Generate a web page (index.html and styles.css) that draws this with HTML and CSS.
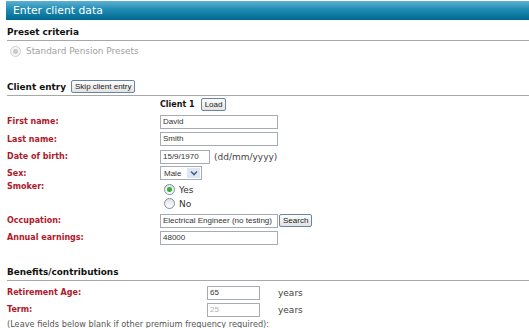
FILE: index.html
```html
<!DOCTYPE html>
<html lang="en">
<head>
    <meta charset="UTF-8">
    <title>Enter client data</title>
    <link rel="stylesheet" href="styles.css">
</head>
<body>
    <div class="panel">
        <div class="panel-title">Enter client data</div>

        <div class="section-head">
            <span class="section-title">Preset criteria</span>
        </div>
        <label class="preset">
            <span class="radio disabled"><span class="dot"></span></span>
            Standard Pension Presets
        </label>

        <div class="section-head client-head">
            <span class="section-title">Client entry</span>
            <button class="btn">Skip client entry</button>
        </div>

        <div class="form">
            <div class="row">
                <div class="label"></div>
                <div class="field"><span class="client-name">Client 1</span><button class="btn">Load</button></div>
            </div>
            <div class="row">
                <div class="label">First name:</div>
                <div class="field"><div class="input wide">David</div></div>
            </div>
            <div class="row tall">
                <div class="label">Last name:</div>
                <div class="field"><div class="input wide">Smith</div></div>
            </div>
            <div class="row">
                <div class="label">Date of birth:</div>
                <div class="field"><div class="input date">15/9/1970</div><span class="hint">(dd/mm/yyyy)</span></div>
            </div>
            <div class="row short-row">
                <div class="label">Sex:</div>
                <div class="field">
                    <div class="select">Male<span class="arrow"><svg width="8" height="6" viewBox="0 0 8 6"><path d="M1 1.5l3 3 3-3" fill="none" stroke="#4d6185" stroke-width="1.6"/></svg></span></div>
                </div>
            </div>
            <div class="row smoker-row">
                <div class="label">Smoker:</div>
                <div class="field radios">
                    <label class="opt"><span class="radio checked"><span class="dot"></span></span>Yes</label>
                    <label class="opt"><span class="radio"></span>No</label>
                </div>
            </div>
            <div class="row">
                <div class="label">Occupation:</div>
                <div class="field"><div class="input wide">Electrical Engineer (no testing)</div><button class="btn search">Search</button></div>
            </div>
            <div class="row">
                <div class="label">Annual earnings:</div>
                <div class="field"><div class="input wide">48000</div></div>
            </div>
        </div>

        <div class="section-head benefits-head">
            <span class="section-title">Benefits/contributions</span>
        </div>
        <div class="form benefits">
            <div class="row">
                <div class="label">Retirement Age:</div>
                <div class="field"><div class="input short">65</div><span class="unit">years</span></div>
            </div>
            <div class="row">
                <div class="label">Term:</div>
                <div class="field"><div class="input short off">25</div><span class="unit">years</span></div>
            </div>
        </div>
        <p class="note">(Leave fields below blank if other premium frequency required):</p>
    </div>
</body>
</html>
```

FILE: styles.css
```css
body {
    margin: 0;
    background: #fff;
    font-family: "DejaVu Sans", Verdana, sans-serif;
    font-size: 9px;
    color: #333;
}
.panel {
    padding: 1px 0 0 7px;
}
.panel-title {
    margin-left: -1px;
    height: 19px;
    line-height: 19px;
    padding-left: 7px;
    color: #fff;
    font-size: 10.8px;
    background: linear-gradient(#5eb0d2, #1f8bb3 45%, #006890);
}
.section-head {
    display: flex;
    align-items: center;
    height: 17px;
    margin-top: 3px;
    border-bottom: 1px solid #a8a8a8;
}
.section-title {
    font-weight: bold;
    font-size: 8.9px;
    color: #111;
}
.preset {
    display: flex;
    align-items: center;
    gap: 5px;
    height: 12px;
    margin: 4px 0 0 3px;
    color: #a0a0a0;
    font-size: 8.9px;
}
.client-head {
    margin-top: 21px;
}
.client-head .btn {
    margin-left: 5px;
}
.btn {
    font-family: "Liberation Sans", Arial, sans-serif;
    font-size: 8px;
    color: #222;
    height: 13px;
    line-height: 11px;
    padding: 0 3px;
    border: 1px solid #6a84a6;
    border-radius: 2px;
    background: linear-gradient(#fdfdfd, #e2e2e2);
}
.row {
    display: flex;
    align-items: center;
    height: 17px;
}
.row.tall {
    height: 18px;
}
.row.short-row {
    height: 16px;
}
.label {
    width: 153px;
    flex-shrink: 0;
    line-height: 11px;
    color: #b0182a;
    font-weight: bold;
    font-size: 8px;
}
.field {
    display: flex;
    align-items: center;
}
.client-name {
    font-weight: bold;
    font-size: 8px;
    color: #111;
    margin-right: 6px;
}
.input {
    box-sizing: border-box;
    height: 14px;
    line-height: 12px;
    padding: 0 2px;
    border: 1px solid #a5acb5;
    background: #fff;
    font-family: "Liberation Sans", Arial, sans-serif;
    font-size: 8px;
    color: #333;
    white-space: nowrap;
    overflow: hidden;
}
.wide {
    width: 118px;
}
.date {
    width: 50px;
}
.hint {
    margin-left: 4px;
    color: #444;
}
.select {
    box-sizing: border-box;
    display: flex;
    align-items: center;
    justify-content: space-between;
    width: 42px;
    height: 14px;
    padding: 0 1px 0 3px;
    border: 1px solid #a5acb5;
    font-family: "Liberation Sans", Arial, sans-serif;
    font-size: 8px;
    color: #333;
}
.arrow {
    display: flex;
    align-items: center;
    justify-content: center;
    width: 13px;
    height: 10px;
    background: #dde6f6;
}
.smoker-row {
    height: 31px;
    align-items: flex-start;
}
.radios {
    flex-direction: column;
    align-items: flex-start;
    gap: 3px;
    padding: 3px 0 0 4px;
}
.opt {
    display: flex;
    align-items: center;
    gap: 4px;
    height: 11px;
    color: #333;
}
.radio {
    box-sizing: border-box;
    display: flex;
    align-items: center;
    justify-content: center;
    width: 11px;
    height: 11px;
    border: 1px solid #7a8ea8;
    border-radius: 50%;
    background: linear-gradient(#e2e2e2, #fff);
}
.radio .dot {
    width: 5px;
    height: 5px;
    border-radius: 50%;
    background: #2fb02f;
}
.radio.disabled {
    border-color: #cfcfcf;
    background: #f5f5f5;
}
.radio.disabled .dot {
    background: #cacaca;
}
.search {
    margin-left: 1px;
}
.benefits-head {
    margin-top: 17px;
}
.benefits {
    margin-top: 3px;
}
.benefits .label {
    width: 200px;
}
.short {
    width: 53px;
}
.off {
    color: #b4b4b4;
}
.unit {
    margin-left: 18px;
    color: #444;
}
.note {
    margin: 0;
    line-height: 12px;
    color: #555;
    font-size: 8.2px;
}
```
